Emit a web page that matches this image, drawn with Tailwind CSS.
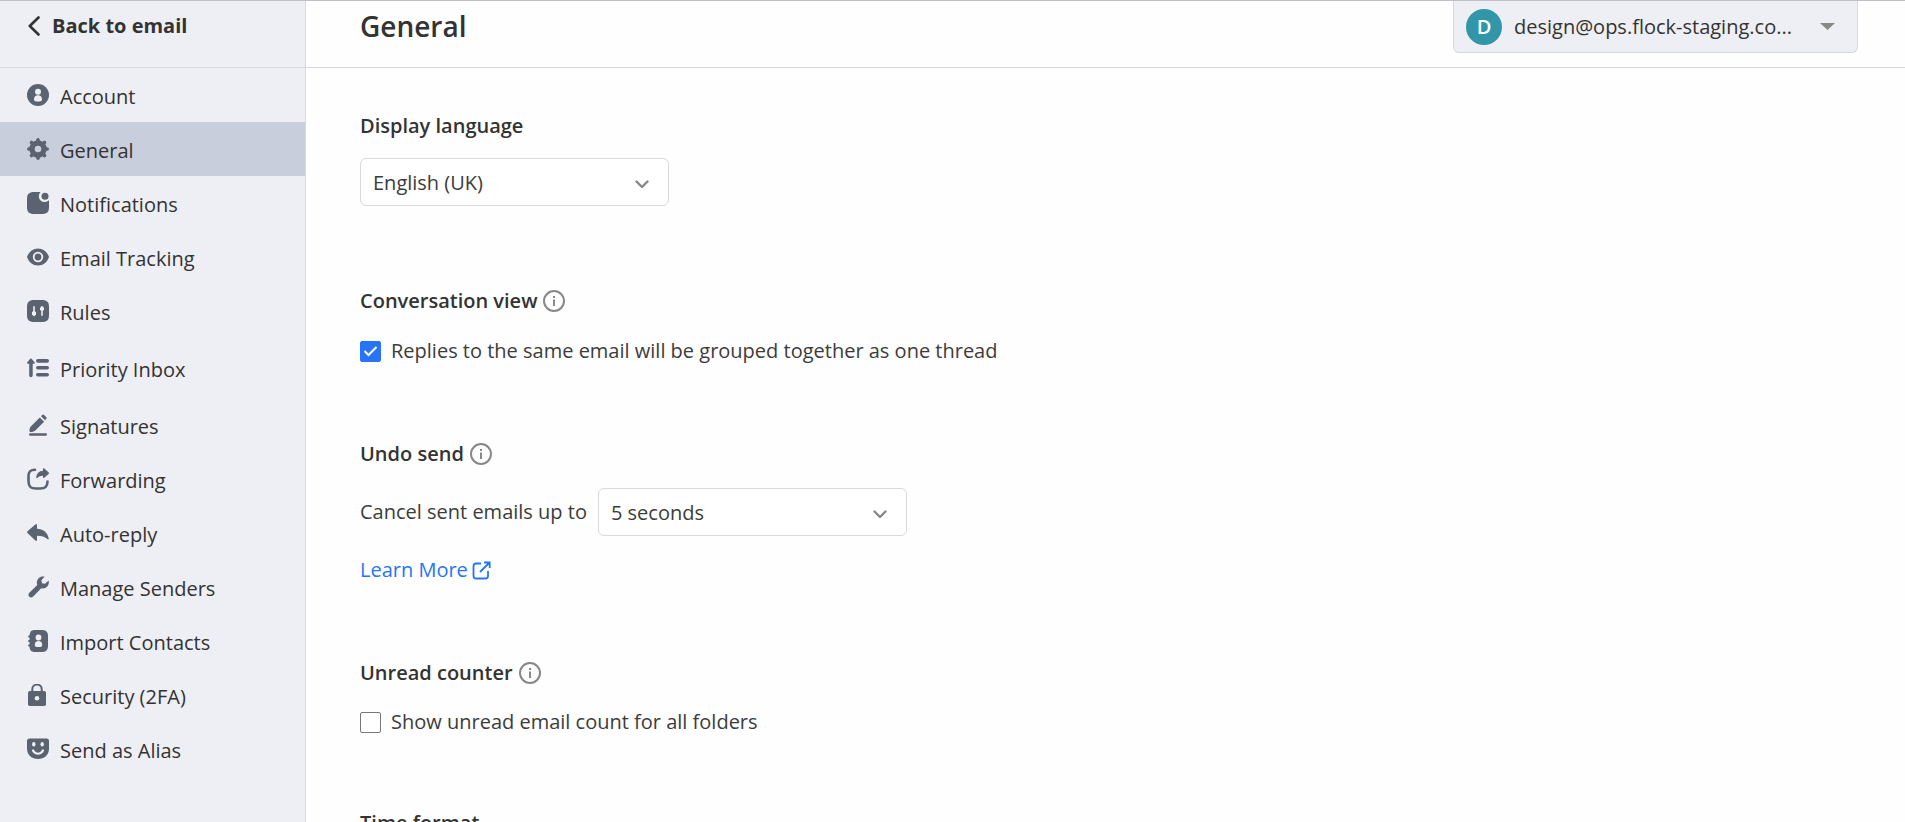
<!DOCTYPE html>
<html lang="en">
<head>
    <meta charset="UTF-8">
    <meta name="viewport" content="width=device-width, initial-scale=1.0">
    <title>Settings - General</title>
    <script src="https://cdn.jsdelivr.net/npm/@tailwindcss/browser@4"></script>
</head>
<body class="flex h-screen overflow-hidden border-t border-[#c0c0c4] bg-[#fefefe] font-['Open_Sans','Noto_Sans',sans-serif] text-[20px] leading-7 text-[#333]">
    <!-- Sidebar -->
    <aside class="w-[306px] shrink-0 border-r border-[#d8d9dd] bg-[#eeeff4]">
        <a href="#" class="flex h-[67px] items-start gap-[11px] border-b border-[#d8d9dd] pt-[11px] pl-7 font-bold">
            <svg class="mt-1 h-5 w-[13px]" viewBox="0 0 13 20" fill="none" stroke="#333" stroke-width="2.600" stroke-linecap="round" stroke-linejoin="round"><path d="M10.500 1.500L1.800 10l8.700 8.500"/></svg>
            Back to email
        </a>
        <nav>
            <a href="#account" class="flex h-[54px] items-center gap-[11px] pl-[27px]">
                <svg class="size-[22px]" viewBox="0 0 22 22" fill="#5c6370"><circle cx="11" cy="11" r="11"/><g fill="#eeeff4"><circle cx="11" cy="7.800" r="3"/><path d="M7 15.200c0-2.700 1.600-3.900 4-3.900s4 1.200 4 3.900c0 1.500-1 2.200-2.200 2.200H9.200C8 17.400 7 16.700 7 15.200z"/></g></svg>
                <span class="pt-1">Account</span>
            </a>
            <a href="#general" class="flex h-[54px] items-center gap-[11px] bg-[#c8cedb] pl-[27px] font-medium">
                <svg class="size-[22px]" viewBox="0 0 22 22" fill="none" stroke="#5c6370"><circle cx="11" cy="11" r="6" stroke-width="5.400"/><path stroke-width="3.600" stroke-linecap="round" d="M11 1.800v2M11 18.200v2M1.800 11h2M18.200 11h2M4.500 4.500l1.400 1.400M16.100 16.100l1.400 1.400M4.500 17.500l1.400-1.400M16.100 5.900l1.400-1.400"/></svg>
                <span class="pt-1">General</span>
            </a>
            <a href="#notifications" class="flex h-[54px] items-center gap-[11px] pl-[27px]">
                <svg class="size-[22px]" viewBox="0 0 22 22" fill="#5c6370"><path d="M7 0h8c5 0 7 2 7 7v8c0 5-2 7-7 7H7c-5 0-7-2-7-7V7c0-5 2-7 7-7z"/><path d="M13.500 0H22v8.300A5.200 5.200 0 0 1 13.500 0z" fill="#eeeff4"/><circle cx="18" cy="4.300" r="3.500"/></svg>
                <span class="pt-1">Notifications</span>
            </a>
            <a href="#tracking" class="flex h-[54px] items-center gap-[11px] pl-[27px]">
                <svg class="size-[22px]" viewBox="0 0 22 22" fill="#5c6370"><path d="M11 2.500c5 0 9.400 3.500 11 8.500-1.600 5-6 8.500-11 8.500S1.600 16 0 11c1.600-5 6-8.500 11-8.500z"/><circle cx="11" cy="11" r="4.300" fill="none" stroke="#eeeff4" stroke-width="1.800"/></svg>
                <span class="pt-1">Email Tracking</span>
            </a>
            <a href="#rules" class="flex h-[54px] items-center gap-[11px] pl-[27px]">
                <svg class="size-[22px]" viewBox="0 0 22 22" fill="#5c6370"><path d="M7 0h8c5 0 7 2 7 7v8c0 5-2 7-7 7H7c-5 0-7-2-7-7V7c0-5 2-7 7-7z"/><g fill="#eeeff4"><rect x="6.200" y="6" width="1.600" height="9" rx=".8"/><path d="M5 12l2-1 2 1v2.500L7 16.500l-2-2z"/><rect x="14.200" y="7" width="1.600" height="9" rx=".8"/><path d="M13 7.700l2-2 2 2V10l-2 1-2-1z"/></g></svg>
                <span class="pt-1">Rules</span>
            </a>
            <a href="#priority" class="flex h-[60px] items-center gap-[11px] pl-[27px]">
                <svg class="size-[22px]" viewBox="0 0 22 22" fill="#5c6370"><path d="M3.200 1.800Q3.900 1.100 4.600 1.800L7.700 5.500Q8 6.800 7 6.800H5.700v11.700a1.700 1.700 0 0 1-3.500 0V6.800H.8Q-.2 6.800.1 5.500z"/><rect x="9" y="2" width="13" height="3.700" rx="1.800"/><rect x="9" y="8.900" width="13" height="3.700" rx="1.800"/><rect x="9" y="15.900" width="13" height="3.700" rx="1.800"/></svg>
                <span class="pt-1">Priority Inbox</span>
            </a>
            <a href="#signatures" class="flex h-[54px] items-center gap-[11px] pl-[27px]">
                <svg class="size-[22px]" viewBox="0 0 22 22" fill="#5c6370"><path d="M2.500 17.500c0-2.500.2-4 1.500-5.300l8.800-8.800 4.300 4.300-8.800 8.800c-1.300 1.300-3.200 1.500-5.300 1.500z"/><path d="M14 2.200l1.100-1.100c.7-.7 1.300-.7 2 0l2 2c.7.7.7 1.300 0 2l-1 1.100z"/><rect x="2" y="19.200" width="18" height="2.500" rx="1.250"/></svg>
                <span class="pt-1">Signatures</span>
            </a>
            <a href="#forwarding" class="flex h-[54px] items-center gap-[11px] pl-[27px]">
                <svg class="size-[22px]" viewBox="0 0 22 22" fill="#5c6370"><path d="M8 1.700C3 1.900 1.500 3.500 1.500 8v5c0 5.500 2 7.500 7.500 7.500h4c5.500 0 7.500-2 7.500-7" fill="none" stroke="#5c6370" stroke-width="2.600" stroke-linecap="round"/><path d="M16 .2q.7-.2 1.300.4l4.200 3.700q.9.900 0 1.700l-4.200 3.700q-1.300.7-1.300-.7V7.800c-2.500 0-4.300.7-5.600 2.200q-1 .8-1.100-.5C9.500 5.500 12 3 16 2.800z"/></svg>
                <span class="pt-1">Forwarding</span>
            </a>
            <a href="#auto-reply" class="flex h-[54px] items-center gap-[11px] pl-[27px]">
                <svg class="size-[22px]" viewBox="0 0 22 22" fill="#5c6370"><path d="M8.300 2.600Q10 1.300 10 3.400v3.300c6 .2 10.500 3.300 11.700 9.800q0 1.300-1 .7c-2.700-2.500-6-3.500-10.700-3.500v3.900q0 2.100-1.700.8L.5 10.900q-.9-.9 0-1.700z"/></svg>
                <span class="pt-1">Auto-reply</span>
            </a>
            <a href="#senders" class="flex h-[54px] items-center gap-[11px] pl-[27px]">
                <svg class="size-[22px]" viewBox="0 0 22 22" fill="#5c6370"><path d="M17.700.6l-3.300 3.600.6 3 3 .6 3.600-3.300c1.200 4.600-2.200 9-7.400 7.800l-8 8.300c-2.700 2.600-6.500-1.200-3.900-3.800l8-7.700C8.400 4 12.500-.6 17.700.6z"/></svg>
                <span class="pt-1">Manage Senders</span>
            </a>
            <a href="#contacts" class="flex h-[54px] items-center gap-[11px] pl-[27px]">
                <svg class="size-[22px]" viewBox="0 0 22 22" fill="#5c6370"><path d="M8 0h7c4 0 6 2 6 6.500v9c0 4.500-2 6.500-6 6.500H8c-4 0-5.500-2-5.500-6.500v-9C2.500 2 4 0 8 0z"/><g stroke="#5c6370" stroke-width="1.800" stroke-linecap="round"><path d="M2 6.500h2M2 11h2M2 15.500h2"/></g><g fill="#eeeff4"><circle cx="11.500" cy="7.500" r="2.900"/><path d="M7.800 14.800c0-2.600 1.400-3.800 3.700-3.800s3.700 1.200 3.700 3.800c0 1.500-.9 2.200-2 2.200H9.800c-1.100 0-2-.7-2-2.200z"/></g></svg>
                <span class="pt-1">Import Contacts</span>
            </a>
            <a href="#security" class="flex h-[54px] items-center gap-[11px] pl-[27px]">
                <svg class="size-[22px]" viewBox="0 0 22 22" fill="#5c6370"><rect x="1" y="7" width="18" height="15" rx="1.800"/><path d="M5.300 8V5.200C5.300-1 14.700-1 14.700 5.200V8" fill="none" stroke="#5c6370" stroke-width="2"/><circle cx="10" cy="14.200" r="2.300" fill="#eeeff4"/></svg>
                <span class="pt-1">Security (2FA)</span>
            </a>
            <a href="#alias" class="flex h-[54px] items-center gap-[11px] pl-[27px]">
                <svg class="size-[22px]" viewBox="0 0 22 22" fill="#5c6370"><path d="M2.500.5h17Q22 .5 22 3v7.500C22 17 17.200 21 11 21S0 17 0 10.500V3Q0 .5 2.500.5z"/><g fill="#eeeff4"><ellipse cx="6.800" cy="6.300" rx="1.700" ry="2.200"/><ellipse cx="15.200" cy="6.300" rx="1.700" ry="2.200"/></g><path d="M6 12.500c2.500 4.300 7.500 4.300 10 0" fill="none" stroke="#eeeff4" stroke-width="2.200" stroke-linecap="round"/></svg>
                <span class="pt-1">Send as Alias</span>
            </a>
        </nav>
    </aside>

    <main class="min-w-0 flex-1">
        <!-- Header -->
        <header class="flex h-[67px] items-start justify-between border-b border-[#d8d9dd] pr-[47px] pl-[54px]">
            <h1 class="pt-[7px] text-[28px] leading-9 font-semibold">General</h1>
            <button type="button" class="flex h-[52px] w-[405px] items-center rounded-b-md border border-t-0 border-[#d8d9dd] bg-[#eeeff4] pl-3 text-left">
                <span class="flex size-9 items-center justify-center rounded-full bg-[#3296a9] font-semibold text-white">D</span>
                <span class="ml-3 w-[284px] whitespace-nowrap">design@ops.flock-staging.co...</span>
                <svg class="ml-[22px] h-[7px] w-[15px]" viewBox="0 0 15 7" fill="#888"><path d="M0 0h15L7.500 7z"/></svg>
            </button>
        </header>

        <!-- Settings -->
        <div class="pt-11 pl-[54px] text-[#3c3c3c]">
            <section class="mb-[81px]">
                <h2 class="mb-[18px] font-semibold text-[#333]"><label for="language">Display language</label></h2>
                <div class="relative w-[309px]">
                    <select id="language" class="h-12 w-full appearance-none rounded-md border border-[#d8d9dd] bg-white px-3 pt-0.5">
                        <option>English (UK)</option>
                    </select>
                    <svg class="pointer-events-none absolute top-[22px] right-5 h-[9px] w-[14px]" viewBox="0 0 14 9" fill="none" stroke="#888" stroke-width="2.400" stroke-linecap="round" stroke-linejoin="round"><path d="M1.500 1.500L7 7l5.500-5.500"/></svg>
                </div>
            </section>

            <section class="mb-[75px]">
                <h2 class="mb-[22px] flex items-center gap-1.5 font-semibold text-[#333]">
                    Conversation view
                    <svg class="size-[22px]" viewBox="0 0 22 22" fill="none" stroke="#888"><circle cx="11" cy="11" r="10" stroke-width="2"/><path d="M11 9.500V16M11 6v2" stroke-width="2"/></svg>
                </h2>
                <label class="flex items-center gap-[10px]">
                    <span class="relative flex size-[21px]">
                        <input type="checkbox" checked class="peer size-[21px] appearance-none rounded-xs border border-[#777] bg-white checked:border-[#2775f6] checked:bg-[#2775f6]">
                        <svg class="pointer-events-none absolute inset-0 hidden size-[21px] peer-checked:block" viewBox="0 0 21 21" fill="none" stroke="#fff" stroke-width="2"><path d="M4.500 10l4 4 8-8"/></svg>
                    </span>
                    Replies to the same email will be grouped together as one thread
                </label>
            </section>

            <section class="mb-[75px]">
                <h2 class="mb-5 flex items-center gap-1.5 font-semibold text-[#333]">
                    Undo send
                    <svg class="size-[22px]" viewBox="0 0 22 22" fill="none" stroke="#888"><circle cx="11" cy="11" r="10" stroke-width="2"/><path d="M11 9.500V16M11 6v2" stroke-width="2"/></svg>
                </h2>
                <div class="mb-5 flex items-center gap-[11px]">
                    <label for="undo">Cancel sent emails up to</label>
                    <div class="relative w-[309px]">
                        <select id="undo" class="h-12 w-full appearance-none rounded-md border border-[#d8d9dd] bg-white px-3 pt-0.5">
                            <option>5 seconds</option>
                        </select>
                        <svg class="pointer-events-none absolute top-[22px] right-5 h-[9px] w-[14px]" viewBox="0 0 14 9" fill="none" stroke="#888" stroke-width="2.400" stroke-linecap="round" stroke-linejoin="round"><path d="M1.500 1.500L7 7l5.500-5.500"/></svg>
                    </div>
                </div>
                <a href="#" class="flex w-fit items-center gap-1 text-[#2775f6]">
                    Learn More
                    <svg class="size-[19px]" viewBox="0 0 19 19" fill="none" stroke="#2775f6" stroke-width="1.800"><path d="M9 2.500H4Q1.500 2.500 1.500 5v10q0 2.500 2.500 2.500h9.500q2.500 0 2.500-2.500V10M8 11l9.500-9.500M12 1.500h5.700V7"/></svg>
                </a>
            </section>

            <section class="mb-[73px]">
                <h2 class="mb-[21px] flex items-center gap-1.5 font-semibold text-[#333]">
                    Unread counter
                    <svg class="size-[22px]" viewBox="0 0 22 22" fill="none" stroke="#888"><circle cx="11" cy="11" r="10" stroke-width="2"/><path d="M11 9.500V16M11 6v2" stroke-width="2"/></svg>
                </h2>
                <label class="flex items-center gap-[10px]">
                    <span class="relative flex size-[21px]">
                        <input type="checkbox" class="peer size-[21px] appearance-none rounded-xs border border-[#777] bg-white checked:border-[#2775f6] checked:bg-[#2775f6]">
                        <svg class="pointer-events-none absolute inset-0 hidden size-[21px] peer-checked:block" viewBox="0 0 21 21" fill="none" stroke="#fff" stroke-width="2"><path d="M4.500 10l4 4 8-8"/></svg>
                    </span>
                    Show unread email count for all folders
                </label>
            </section>

            <section>
                <h2 class="font-semibold text-[#333]">Time format</h2>
            </section>
        </div>
    </main>
</body>
</html>
